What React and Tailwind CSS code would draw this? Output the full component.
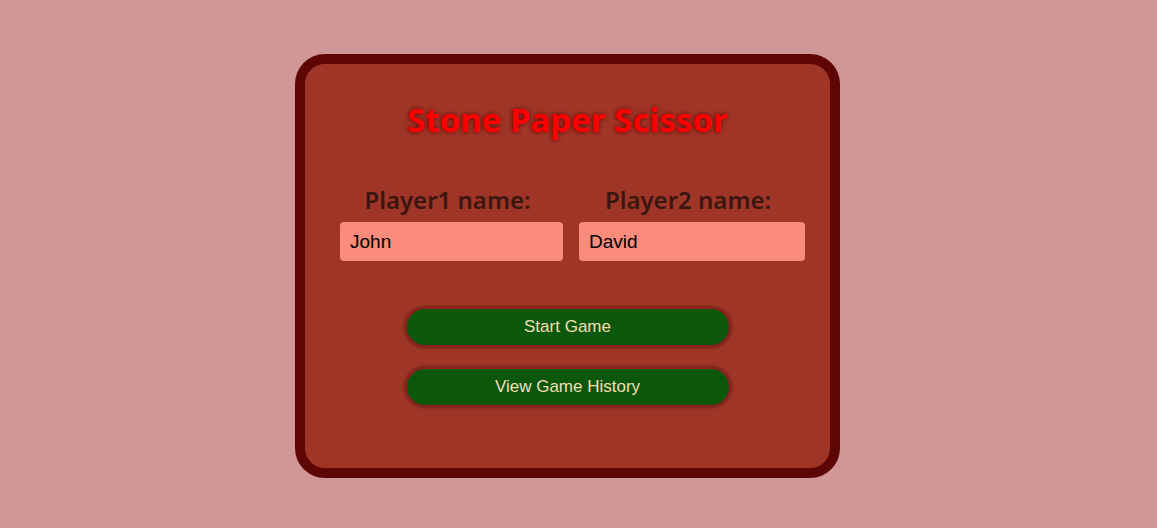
import React, { useState } from "react";

export default function App() {
  const [p1, setP1] = useState("John");
  const [p2, setP2] = useState("David");

  return (
    <div className="min-h-[528px] w-full bg-[#d19696] flex justify-center pr-[22px] pt-[54px]">
      <div className="w-[545px] h-[424px] rounded-[30px] border-[10px] border-[#5e0505] bg-[#9e3526] flex flex-col items-center">
        <h1
          className="mt-[34px] text-[33px] leading-[44px] font-bold text-[#ff0000] [text-shadow:0_0_4px_#5e0505]"
          style={{ fontFamily: '"Noto Sans", "Open Sans", sans-serif' }}
        >
          Stone Paper Scissor
        </h1>

        <div className="mt-[41px] flex gap-[16px] px-[35px] w-full">
          <div className="flex-1 flex flex-col items-center">
            <label
              className="mr-[8px] text-[24px] leading-[34px] font-semibold text-[#3b1510]"
              style={{ fontFamily: '"Noto Sans", "Open Sans", sans-serif' }}
            >
              Player1 name:
            </label>
            <input
              value={p1}
              onChange={(e) => setP1(e.target.value)}
              className="mt-[5px] w-[223px] h-[39px] rounded-[4px] bg-[#fb8c7b] px-[10px] text-[19px] text-black outline-none"
              style={{ fontFamily: '"Liberation Sans", Arial, sans-serif' }}
            />
          </div>
          <div className="flex-1 flex flex-col items-center">
            <label
              className="mr-[8px] text-[24px] leading-[34px] font-semibold text-[#3b1510]"
              style={{ fontFamily: '"Noto Sans", "Open Sans", sans-serif' }}
            >
              Player2 name:
            </label>
            <input
              value={p2}
              onChange={(e) => setP2(e.target.value)}
              className="mt-[5px] w-[226px] h-[39px] rounded-[4px] bg-[#fb8c7b] px-[10px] text-[19px] text-black outline-none"
              style={{ fontFamily: '"Liberation Sans", Arial, sans-serif' }}
            />
          </div>
        </div>

        <div className="mt-[46px] flex flex-col gap-[20px]">
          {["Start Game", "View Game History"].map((t) => (
            <button
              key={t}
              className="w-[326px] h-[40px] rounded-full border-2 border-[#8a2222] bg-[#0b570b] text-[17px] text-[#f5deb3] shadow-[0_0_3px_rgba(60,0,0,0.8)]"
              style={{ fontFamily: '"Liberation Sans", Arial, sans-serif' }}
            >
              {t}
            </button>
          ))}
        </div>
      </div>
    </div>
  );
}
